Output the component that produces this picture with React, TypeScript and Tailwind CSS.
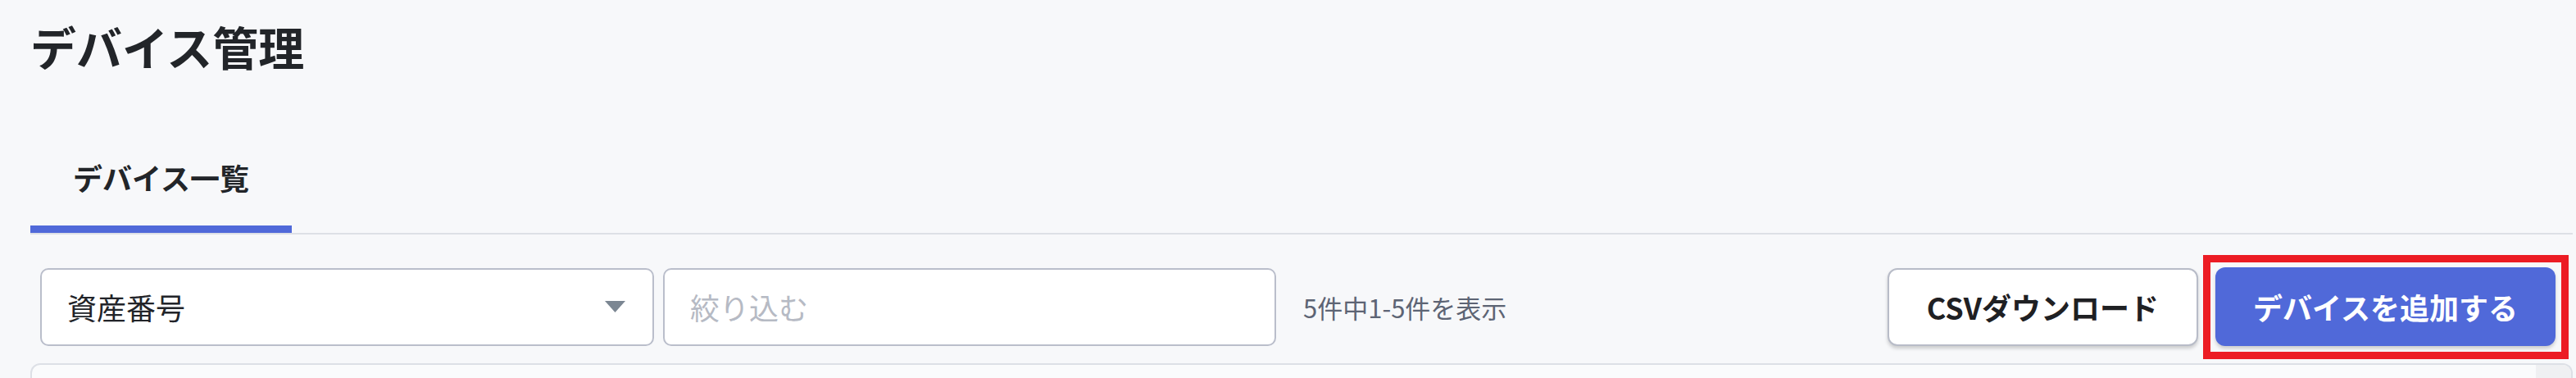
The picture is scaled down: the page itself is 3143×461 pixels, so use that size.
import { useState } from 'react';

const FONT = "font-['Noto_Sans_CJK_JP','Noto_Sans',sans-serif]";

function FieldSelect() {
  return (
    <div className="relative flex h-[95px] w-[749px] shrink-0 items-center rounded-[10px] border-2 border-[#babecb] bg-white pl-[31px] pr-[33px]">
      <span className="flex-1 text-[36px] leading-none text-[#222429]">資産番号</span>
      <svg width="25" height="14" viewBox="0 0 25 14" aria-hidden="true">
        <polygon points="0,0 25,0 12.5,14" fill="#7b8692" />
      </svg>
    </div>
  );
}

export default function App() {
  const [query, setQuery] = useState('');

  return (
    <div className={`min-h-screen bg-[#f7f8fa] ${FONT}`}>
      <div className="pl-[37px] pr-[4px]">
        <h1 className="pt-[28px] text-[56px] font-bold leading-none text-[#222529]">デバイス管理</h1>

        <div className="mt-[74px] flex border-b-2 border-[#dde0e6]">
          <button className="border-b-[9px] border-[#5069d9] px-[52px] pt-[40px] pb-[41px] text-[36px] font-bold leading-none text-[#222529]">
            デバイス一覧
          </button>
        </div>

        <div className="flex items-center pt-[40px] pb-[21px] pl-[12px] pr-[21px]">
          <FieldSelect />
          <input
            value={query}
            onChange={(e) => setQuery(e.target.value)}
            placeholder="絞り込む"
            className="ml-[11px] h-[95px] w-[748px] rounded-[10px] border-2 border-[#babecb] bg-white px-[31px] text-[36px] text-[#222429] outline-none placeholder:text-[#b6bac4]"
          />
          <span className="ml-[33px] text-[31px] leading-none text-[#5d6474]">5件中1-5件を表示</span>

          <div className="ml-auto flex items-center gap-[21px]">
            <button className="h-[95px] rounded-[12px] border-2 border-[#b8bcc8] bg-white px-[46px] text-[36px] font-bold leading-none text-[#1f2023] shadow-[0_3px_4px_rgba(0,0,0,0.18)]">
              CSVダウンロード
            </button>
            <button className="relative h-[96px] rounded-[12px] bg-[#5069d9] px-[46px] text-[36px] font-bold leading-none text-white shadow-[0_3px_4px_rgba(0,0,0,0.18)]">
              デバイスを追加する
              <span className="pointer-events-none absolute -top-[15px] -bottom-[16px] -left-[15px] -right-[16px] border-[9px] border-[#ec1c24]" />
            </button>
          </div>
        </div>

        <div className="flex h-[18px] overflow-hidden rounded-t-[12px] border-2 border-b-0 border-[#dde0e6] bg-[#fafbfc]">
          <div className="flex-1" />
          <div className="w-[43px] bg-[#eff0f2]" />
        </div>
      </div>
    </div>
  );
}
